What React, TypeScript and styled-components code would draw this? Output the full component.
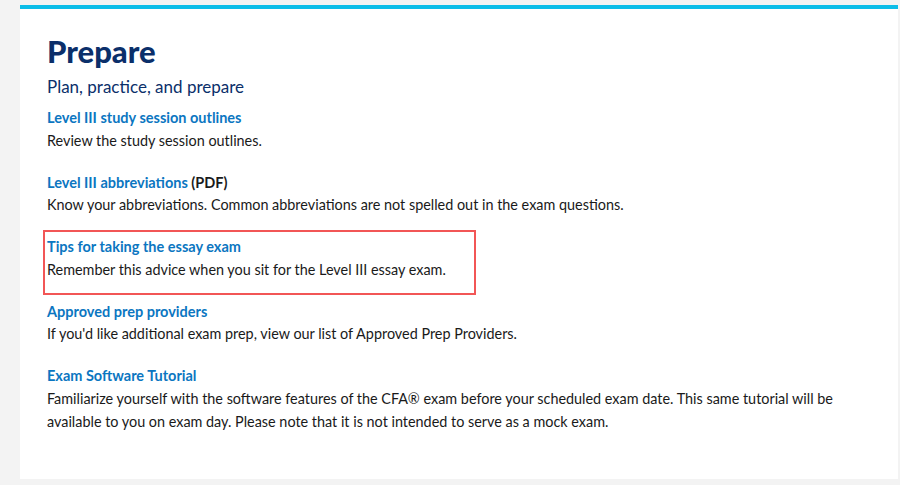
import React from "react";
import styled, { createGlobalStyle } from "styled-components";

const Global = createGlobalStyle`
  html, body { margin: 0; padding: 0; background: #f3f3f3; }
  body { font-family: Lato, "Open Sans", sans-serif; }
`;

const Page = styled.div`
  padding: 5px 2px 6px 20px;
  width: 900px;
  height: 485px;
  box-sizing: border-box;
`;

const Card = styled.section`
  background: #ffffff;
  border-top: 4px solid #0cbde8;
  height: 474px;
  box-sizing: border-box;
  padding: 24px 27px 0 27px;
`;

const Title = styled.h1`
  margin: 0;
  font-size: 31px;
  line-height: 36px;
  font-weight: 900;
  color: #0b2f6a;
`;

const Subtitle = styled.h2`
  margin: 7px 0 0 0;
  font-size: 17px;
  line-height: 22px;
  font-weight: 400;
  color: #0b2f6a;
`;

const List = styled.div`
  margin-top: 9px;
  display: flex;
  flex-direction: column;
  gap: 19.5px;
`;

const Item = styled.div<{ $highlight?: boolean }>`
  display: flex;
  flex-direction: column;
  ${(p) =>
    p.$highlight
      ? `
    border: 2px solid #f25656;
    width: 433px;
    box-sizing: border-box;
    margin: -6px 0 -14px -4px;
    padding: 4px 0 12px 2px;
  `
      : ""}
`;

const Heading = styled.div`
  font-size: 14.5px;
  line-height: 21.5px;
  font-weight: 700;
  color: #1a1a1a;
`;

const Link = styled.a`
  color: #0b76c1;
  text-decoration: none;
`;

const Desc = styled.p`
  margin: 0;
  font-size: 14.4px;
  line-height: 23.5px;
  color: #1a1a1a;
`;

const items = [
  {
    link: "Level III study session outlines",
    desc: "Review the study session outlines.",
  },
  {
    link: "Level III abbreviations",
    extra: " (PDF)",
    desc: "Know your abbreviations. Common abbreviations are not spelled out in the exam questions.",
  },
  {
    link: "Tips for taking the essay exam",
    desc: "Remember this advice when you sit for the Level III essay exam.",
    highlight: true,
  },
  {
    link: "Approved prep providers",
    desc: "If you'd like additional exam prep, view our list of Approved Prep Providers.",
  },
  {
    link: "Exam Software Tutorial",
    desc: "Familiarize yourself with the software features of the CFA® exam before your scheduled exam date. This same tutorial will be available to you on exam day. Please note that it is not intended to serve as a mock exam.",
  },
];

export default function App() {
  return (
    <>
      <Global />
      <Page>
        <Card>
          <Title>Prepare</Title>
          <Subtitle>Plan, practice, and prepare</Subtitle>
          <List>
            {items.map((it) => (
              <Item key={it.link} $highlight={it.highlight}>
                <Heading>
                  <Link href="#">{it.link}</Link>
                  {it.extra}
                </Heading>
                <Desc>{it.desc}</Desc>
              </Item>
            ))}
          </List>
        </Card>
      </Page>
    </>
  );
}
